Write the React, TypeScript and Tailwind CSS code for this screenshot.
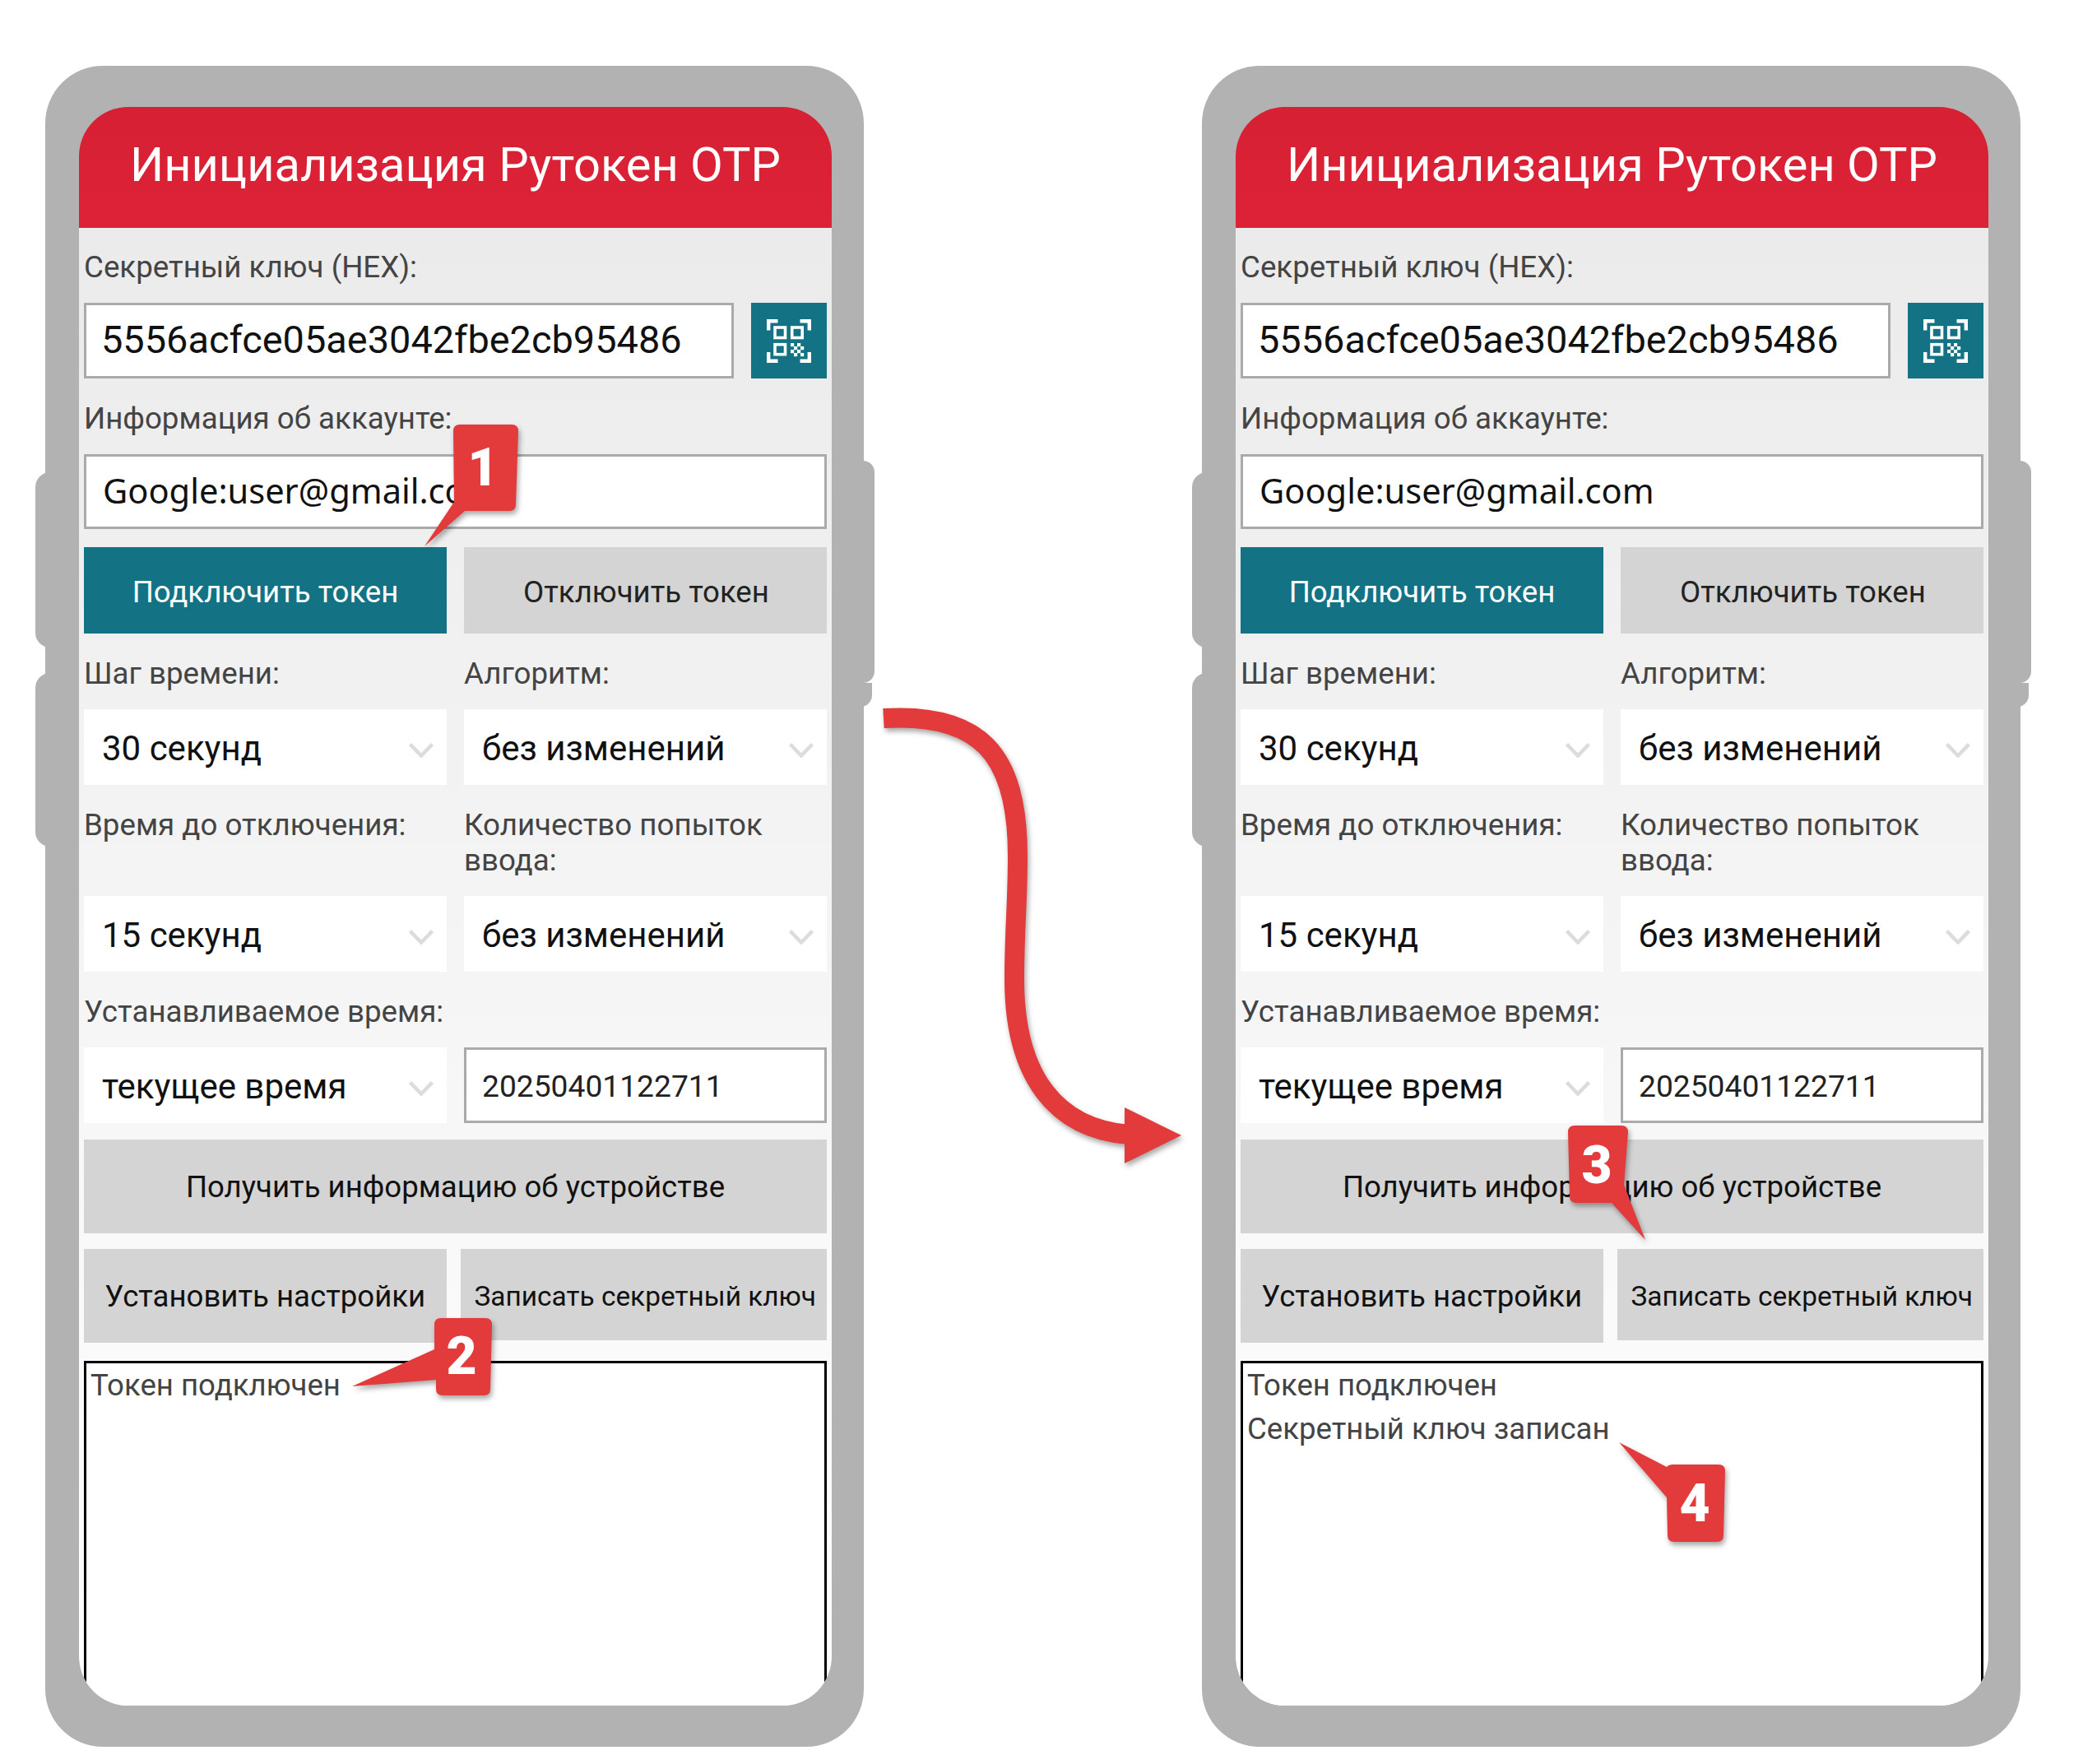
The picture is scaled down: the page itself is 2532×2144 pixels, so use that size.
const Chevron = () => (
  <svg viewBox="0 0 30 18" className="absolute right-[16px] top-[41px] w-[30px] h-[18px]" fill="none">
    <path d="M1.5 1.5 L15 15.5 L28.5 1.5" stroke="#dcdcdc" strokeWidth="4.5" />
  </svg>
);

const QrIcon = () => (
  <svg viewBox="0 0 54 53" className="w-[54px] h-[53px]" fill="none" stroke="#fff">
    <g strokeWidth="4.4">
      <path d="M2.2 13.5 V2.2 H13.5" />
      <path d="M40.5 2.2 H51.8 V13.5" />
      <path d="M2.2 40 V50.8 H13.5" />
      <path d="M40.5 50.8 H51.8 V40" />
    </g>
    <g strokeWidth="3.6">
      <rect x="10" y="10" width="12.5" height="12.5" />
      <rect x="30.7" y="10" width="12.5" height="12.5" />
      <rect x="10" y="30.7" width="12.5" height="12" />
    </g>
    <g fill="#fff" stroke="none">
      <rect x="29" y="29" width="4.2" height="4.2" />
      <rect x="37" y="29" width="4.2" height="4.2" />
      <rect x="33" y="33" width="4.2" height="4.2" />
      <rect x="41" y="33" width="4.2" height="4.2" />
      <rect x="29" y="37" width="4.2" height="4.2" />
      <rect x="37" y="37" width="4.2" height="4.2" />
      <rect x="33" y="41" width="4.2" height="4.2" />
      <rect x="41" y="41" width="4.2" height="4.2" />
    </g>
  </svg>
);

const Label = ({ children }: { children: React.ReactNode }) => (
  <div className="pt-[27px] pb-[22px] text-[36.7px] leading-[43px] text-[#444]">{children}</div>
);

const Select = ({ value }: { value: string }) => (
  <div className="relative h-[92px] bg-white pl-[22px] pt-[2px] flex items-center text-[42px] text-[#111]">
    {value}
    <Chevron />
  </div>
);

const Phone = ({ log }: { log: string[] }) => (
  <div className="relative w-[995px] h-[2043px] shrink-0 rounded-[70px] bg-[#b2b2b2] pt-[50px] pl-[41px] font-['Roboto',sans-serif]">
    {/* side buttons */}
    <div className="absolute left-[-12px] top-[494px] w-[24px] h-[213px] rounded-l-[18px] bg-[#b2b2b2]" />
    <div className="absolute left-[-12px] top-[738px] w-[24px] h-[211px] rounded-l-[18px] bg-[#b2b2b2]" />
    <div className="absolute right-[-13px] top-[480px] w-[24px] h-[270px] rounded-r-[14px] bg-[#b2b2b2]" />
    <div className="absolute right-[-10px] top-[750px] w-[20px] h-[29px] rounded-br-[14px] bg-[#b2b2b2]" />

    <div className="relative flex flex-col w-[915px] h-[1943px] rounded-[60px] overflow-hidden">
      <header className="h-[147px] shrink-0 bg-linear-to-b from-[#d62033] to-[#de2237] text-white text-[57.8px] leading-[66px] text-center pt-[37px]">
        Инициализация Рутокен OTP
      </header>

      <div className="flex-auto flex flex-col px-[6px] bg-linear-to-b from-[#ebebeb] to-white">
        <div className="pt-[26px] pb-[22px] text-[36.7px] leading-[43px] text-[#444]">Секретный ключ (HEX):</div>
        <div className="flex gap-[21px]">
          <div className="w-[790px] h-[92px] bg-white border-[3px] border-[#aaa] pl-[18px] pb-[2px] flex items-center text-[46.9px] text-[#111]">
            5556acfce05ae3042fbe2cb95486
          </div>
          <button className="w-[92px] h-[92px] bg-[#137385] flex items-center justify-center">
            <QrIcon />
          </button>
        </div>

        <Label>Информация об аккаунте:</Label>
        <div className="h-[91px] bg-white border-[3px] border-[#aaa] pl-[20px] pb-[2px] flex items-center text-[41.6px] text-[#111] font-['Noto_Sans',sans-serif]">
          Google:user@gmail.com
        </div>

        <div className="mt-[22px] grid grid-cols-2 gap-[21px]">
          <button className="h-[105px] pt-[5px] bg-[#137385] text-white text-[36.6px]">Подключить токен</button>
          <button className="h-[105px] pt-[5px] pl-[2px] bg-[#d4d4d4] text-[#222] text-[36.6px]">Отключить токен</button>
        </div>

        <div className="grid grid-cols-2 gap-x-[21px]">
          <Label>Шаг времени:</Label>
          <Label>Алгоритм:</Label>
          <Select value="30 секунд" />
          <Select value="без изменений" />
          <Label>Время до отключения:</Label>
          <Label>Количество попыток ввода:</Label>
          <Select value="15 секунд" />
          <Select value="без изменений" />
          <Label>Устанавливаемое время:</Label>
          <div />
          <Select value="текущее время" />
          <div className="h-[92px] bg-white border-[3px] border-[#aaa] pl-[19px] pt-[3px] flex items-center text-[37.2px] text-[#222]">
            20250401122711
          </div>
        </div>

        <button className="mt-[20px] h-[114px] pt-[2px] bg-[#d4d4d4] text-[#111] text-[36.6px]">
          Получить информацию об устройстве
        </button>

        <div className="mt-[19px] flex gap-[17px]">
          <button className="w-[441px] h-[114px] pt-[3px] bg-[#d4d4d4] text-[#111] text-[36.6px]">Установить настройки</button>
          <button className="w-[446px] h-[111px] pt-[6px] pl-[4px] bg-[#d4d4d4] text-[#111] text-[33.4px] whitespace-nowrap">Записать секретный ключ</button>
        </div>

        <div className="mt-[22px] -mb-[12px] flex-auto border-[3px] border-black bg-white pl-[5px] text-[36.6px] leading-[53px] text-[#444]">
          {log.map((line) => (
            <div key={line}>{line}</div>
          ))}
        </div>
      </div>
    </div>
  </div>
);

const Digit = ({ x, y, n }: { x: number; y: number; n: string }) => (
  <text x={x} y={y} textAnchor="middle" fill="#fff" fontFamily="Roboto, sans-serif" fontWeight="900" fontSize="64">
    {n}
  </text>
);

// callouts and the big arrow lie over both phones, in page coordinates
const Overlay = () => (
  <svg viewBox="0 0 2532 2144" className="absolute inset-0 w-[2532px] h-[2144px] pointer-events-none drop-shadow-[2px_4px_3px_rgba(0,0,0,0.35)]">
    <path d="M1074 873 C1190 866 1237 915 1237 1040 C1237 1100 1233 1130 1233 1190 C1233 1310 1285 1372 1372 1379" fill="none" stroke="#e33a3c" strokeWidth="24" />
    <path d="M1367 1346 L1436 1380 L1367 1414 Z" fill="#e33a3c" />

    <path d="M559 516 H622 Q630 516 630 524 L627 613 Q627 621 619 621 H565 L516 664 L552 610 L551 524 Q551 516 559 516 Z" fill="#e33a3c" />
    <Digit x={587} y={590} n="1" />

    <path d="M536 1602 H590 Q598 1602 598 1610 L596 1688 Q596 1696 588 1696 H538 Q530 1696 530 1688 L530 1677 L428 1685 L528 1640 L528 1610 Q528 1602 536 1602 Z" fill="#e33a3c" />
    <Digit x={561} y={1670} n="2" />

    <path d="M1914 1368 H1971 Q1979 1368 1979 1376 L1974 1440 L2000 1507 L1959 1462 H1916 Q1908 1462 1908 1454 L1906 1376 Q1906 1368 1914 1368 Z" fill="#e33a3c" />
    <Digit x={1941} y={1438} n="3" />

    <path d="M2034 1780 H2089 Q2097 1780 2097 1788 L2095 1866 Q2095 1874 2087 1874 H2035 Q2027 1874 2027 1866 L2026 1820 L1968 1753 L2026 1783 Q2028 1780 2034 1780 Z" fill="#e33a3c" />
    <Digit x={2060} y={1849} n="4" />
  </svg>
);

export default function App() {
  return (
    <div className="relative w-[2532px] h-[2144px] bg-white overflow-hidden flex gap-[411px] pl-[55px] pt-[80px]">
      <Phone log={["Токен подключен"]} />
      <Phone log={["Токен подключен", "Секретный ключ записан"]} />
      <Overlay />
    </div>
  );
}
